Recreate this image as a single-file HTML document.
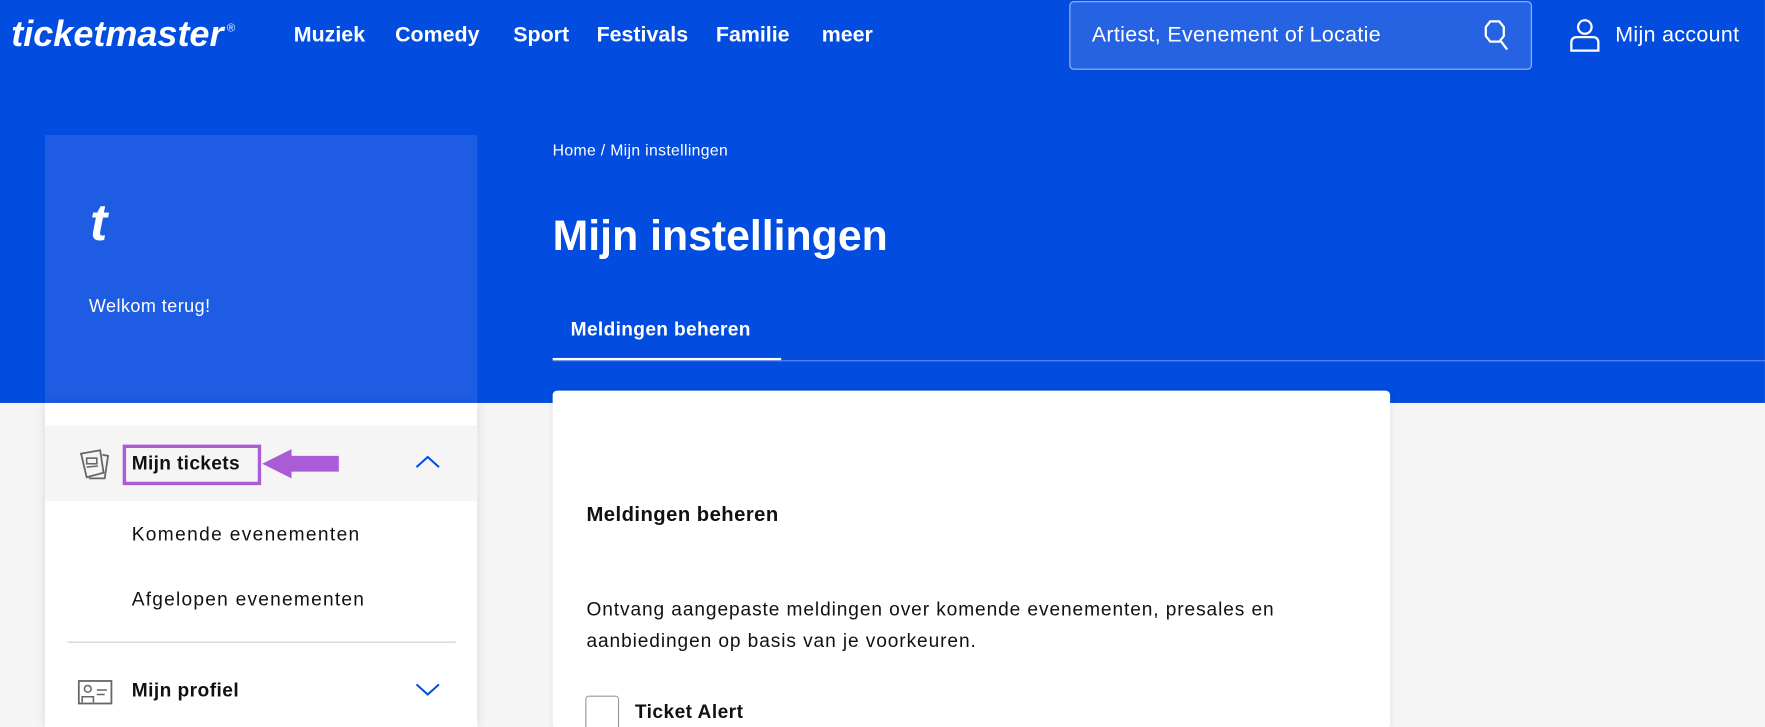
<!DOCTYPE html>
<html><head><meta charset="utf-8"><style>
*{margin:0;padding:0;box-sizing:border-box}
html,body{width:1765px;height:727px;overflow:hidden;background:#f5f5f5;font-family:"Liberation Sans",sans-serif}
#w{width:1568px;height:646px;transform:scale(1.1256);transform-origin:0 0;position:relative;background:#f5f5f5}
.a{position:absolute;white-space:nowrap}
.blue{position:absolute;left:0;top:0;width:1568px;height:358px;background:#024ddf}
.nav{color:#fff;font-weight:bold;font-size:19px;top:21px}
</style></head><body><div id="w">
<div class="blue"></div>
<div class="a" style="left:10px;top:12px;color:#fff;font-style:italic;font-weight:bold;font-size:32px;letter-spacing:0px">ticketmaster<span style="font-size:10px;vertical-align:top;font-style:normal;font-weight:normal;margin-left:3px;position:relative;top:8px">®</span></div>
<div class="a nav" style="left:261px">Muziek</div>
<div class="a nav" style="left:351px">Comedy</div>
<div class="a nav" style="left:456px">Sport</div>
<div class="a nav" style="left:530px">Festivals</div>
<div class="a nav" style="left:636px">Familie</div>
<div class="a nav" style="left:730px">meer</div>
<div class="a" style="left:950px;top:1px;width:411px;height:61px;background:#2563e3;border:1px solid rgba(255,255,255,.55);border-radius:4px"></div>
<div class="a" style="left:970px;top:21px;color:#fff;font-size:19px;letter-spacing:0.3px">Artiest, Evenement of Locatie</div>
<svg class="a" style="left:1314px;top:16px" width="34" height="32" viewBox="0 0 34 32"><polygon points="10,3 18,3 22,8 22,16 18,21 10,21 6,16 6,8" fill="none" stroke="#fff" stroke-width="2"/><line x1="19" y1="20" x2="25" y2="28" stroke="#fff" stroke-width="2"/></svg>
<svg class="a" style="left:1392px;top:15px" width="32" height="32" viewBox="0 0 32 32"><circle cx="16" cy="9" r="6" fill="none" stroke="#fff" stroke-width="2"/><path d="M4 30V23Q4 18 9 18H23Q28 18 28 23V30Z" fill="none" stroke="#fff" stroke-width="2"/></svg>
<div class="a" style="left:1435px;top:21px;color:#fff;font-size:19px;letter-spacing:0.3px">Mijn account</div>

<div class="a" style="left:40px;top:120px;width:384px;height:238px;background:#1e5ce3"></div>
<div class="a" style="left:40px;top:358px;width:384px;height:288px;background:#fff;box-shadow:0 0 8px rgba(0,0,0,.12)"></div>
<div class="a" style="left:80px;top:170px;color:#fff;font-style:italic;font-weight:bold;font-size:46px">t</div>
<div class="a" style="left:79px;top:264px;color:#fff;font-size:16px;letter-spacing:0.4px">Welkom terug!</div>
<div class="a" style="left:40px;top:378px;width:384px;height:67px;background:#f5f5f5"></div>
<svg class="a" style="left:69px;top:398px" width="30" height="30" viewBox="0 0 30 30"><path d="M3 5L20 2L23 22L8 26Z" fill="none" stroke="#666" stroke-width="1.6"/><path d="M22 6L27 7L24 27L10 27" fill="none" stroke="#666" stroke-width="1.6"/><rect x="8" y="9" width="9" height="5" fill="none" stroke="#666" stroke-width="1.4"/><line x1="8" y1="17" x2="18" y2="16" stroke="#666" stroke-width="1.4"/></svg>
<div class="a" style="left:109px;top:395px;width:123px;height:36px;border:3px solid #aa5bd5"></div>
<div class="a" style="left:117px;top:402px;font-size:17px;font-weight:bold;color:#111;letter-spacing:0.3px">Mijn tickets</div>
<svg class="a" style="left:233px;top:397px" width="70" height="30" viewBox="0 0 70 30"><polygon points="0,15 26,2 26,8 68,8 68,22 26,22 26,28" fill="#aa5bd5"/></svg>
<svg class="a" style="left:368px;top:403px" width="24" height="14" viewBox="0 0 24 14"><polyline points="2,12 12,3 22,12" fill="none" stroke="#024ddf" stroke-width="1.8"/></svg>
<div class="a" style="left:117px;top:465px;font-size:17px;color:#111;letter-spacing:1.2px">Komende evenementen</div>
<div class="a" style="left:117px;top:523px;font-size:17px;color:#111;letter-spacing:1.1px">Afgelopen evenementen</div>
<div class="a" style="left:60px;top:570px;width:345px;height:1px;background:#ccc"></div>
<svg class="a" style="left:69px;top:603px" width="32" height="24" viewBox="0 0 32 24"><rect x="1" y="2" width="29" height="20" fill="none" stroke="#666" stroke-width="1.6"/><circle cx="9" cy="9" r="3" fill="none" stroke="#666" stroke-width="1.4"/><path d="M4 21V16H14V21" fill="none" stroke="#666" stroke-width="1.4"/><line x1="17" y1="10" x2="26" y2="10" stroke="#666" stroke-width="1.4"/><line x1="17" y1="14" x2="24" y2="14" stroke="#666" stroke-width="1.4"/></svg>
<div class="a" style="left:117px;top:604px;font-size:17px;font-weight:bold;color:#111;letter-spacing:0.4px">Mijn profiel</div>
<svg class="a" style="left:368px;top:606px" width="24" height="14" viewBox="0 0 24 14"><polyline points="2,2 12,11 22,2" fill="none" stroke="#024ddf" stroke-width="1.8"/></svg>

<div class="a" style="left:491px;top:125px;color:#fff;font-size:14px;letter-spacing:0.3px">Home / Mijn instellingen</div>
<div class="a" style="left:491px;top:189px;color:#fff;font-size:38px;font-weight:bold">Mijn instellingen</div>
<div class="a" style="left:507px;top:283px;color:#fff;font-size:17px;font-weight:bold;letter-spacing:0.3px">Meldingen beheren</div>
<div class="a" style="left:491px;top:320px;width:1077px;height:1px;background:rgba(255,255,255,.35)"></div>
<div class="a" style="left:491px;top:318px;width:203px;height:2px;background:#fff"></div>

<div class="a" style="left:491px;top:347px;width:744px;height:300px;background:#fff;border-radius:4px;box-shadow:0 0 6px rgba(0,0,0,.08)"></div>
<div class="a" style="left:521px;top:447px;font-size:18px;font-weight:bold;color:#111;letter-spacing:0.4px">Meldingen beheren</div>
<div class="a" style="left:521px;top:528px;font-size:17px;color:#111;line-height:28px;letter-spacing:0.8px">Ontvang aangepaste meldingen over komende evenementen, presales en<br>aanbiedingen op basis van je voorkeuren.</div>
<div class="a" style="left:520px;top:618px;width:30px;height:34px;border:1px solid #999;border-radius:3px;background:#fff"></div>
<div class="a" style="left:564px;top:623px;font-size:17px;font-weight:bold;color:#111;letter-spacing:0.4px">Ticket Alert</div>
</div></body></html>
